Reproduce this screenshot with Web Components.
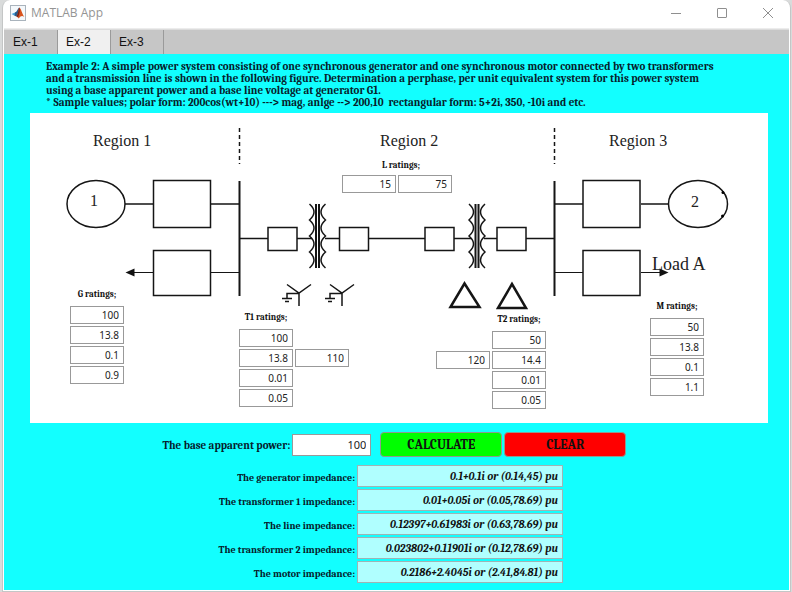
<!DOCTYPE html>
<html lang="en">
<head>
<meta charset="utf-8">
<meta name="viewport" content="width=device-width, initial-scale=1">
<title>MATLAB App</title>
<style>
  html, body { height: 100%; }
  body { margin: 0; background: #d9dbdb; }
</style>
</head>
<body>
<app-window caption="MATLAB App">
  <tab-strip slot="tabs"></tab-strip>
  <example-text></example-text>
  <power-diagram></power-diagram>
  <base-form></base-form>
  <result-list></result-list>
</app-window>

<script>
const define = (name, html) => {
  customElements.define(name, class extends HTMLElement {
    constructor() {
      super();
      this.attachShadow({ mode: 'open' });
    }
    connectedCallback() {
      this.shadowRoot.innerHTML = typeof html === 'function' ? html(this) : html;
    }
  });
};

const serif = '"Cambria", "Caladea", "Liberation Serif", serif';

define('app-window', host => `
  <style>
    :host { display: flex; flex-direction: column; box-sizing: border-box; min-height: 100%;
      margin: 0 1px 0 2px; border: solid #c4c6c6; border-width: 0 1px 1px; border-radius: 8px 8px 0 0;
      background: #fff; overflow: hidden; padding: 0 1px 1px; }
    header { display: flex; align-items: center; height: 29px; padding: 0 13px 3px 6px; box-sizing: border-box;
      border-bottom: 1px solid #ececec; }
    h1 { flex: 1; margin: 0 0 0 5px; font: 12px/16px "Open Sans", sans-serif; color: #949494; }
    nav { display: flex; gap: 30px; }
    button { border: 0; padding: 0; background: none; width: 16px; height: 16px; display: block; }
    svg { display: block; }
    main { flex: 1; background: #12ffff; padding: 7px 0; }
  </style>
  <header>
    <svg width="16" height="16" viewBox="0 0 16 16" aria-hidden="true">
      <rect x=".5" y=".5" width="15" height="15" fill="#f4f8fb" stroke="#a9b3bc"/>
      <path d="M1.5 9 5 7.4 6.8 8.8 4.6 10.8Z" fill="#4aa0d8"/>
      <path d="M5 7.4C7 7.2 7.6 4 9.2 2.6L8.4 8.4 6.4 11.4 4.6 10.8Z" fill="#275b8c"/>
      <path d="M9.2 2.6C11 3.2 12 8.6 14.4 12.2 12.4 10.4 11 10.4 8.6 13.6 8 12 7.4 11.4 6.4 11.4 8 9.6 8.4 5 9.2 2.6Z" fill="#d9541e"/>
      <path d="M9.2 2.6C10.2 4.6 10 8.4 8 12.4 7.6 11.8 7 11.4 6.4 11.4 8 9.6 8.4 5 9.2 2.6Z" fill="#7a2318"/>
    </svg>
    <h1>${host.getAttribute('caption')}</h1>
    <nav>
      <button aria-label="Minimize"><svg width="16" height="16"><path d="M3 8.5h10" stroke="#8f8f8f"/></svg></button>
      <button aria-label="Maximize"><svg width="16" height="16"><rect x="3.5" y="3.5" width="9" height="9" rx=".5" fill="none" stroke="#8f8f8f"/></svg></button>
      <button aria-label="Close"><svg width="16" height="16"><path d="M3 3 13 13M13 3 3 13" stroke="#8f8f8f"/></svg></button>
    </nav>
  </header>
  <slot name="tabs"></slot>
  <main><slot></slot></main>`);

define('tab-strip', `
  <style>
    :host { display: block; background: #c6c6c6; border-top: 1px solid #dcdcdc; }
    div { display: flex; height: 24px; padding-left: 1px; }
    button { width: 53px; border: 0; border-right: 1px solid #9a9a9a; padding: 0 0 0 8px; text-align: left;
      background: none; font: 12px/24px "Liberation Sans", Arial, sans-serif; color: #111; }
    [aria-selected="true"] { background: #f0f0f0; }
  </style>
  <div role="tablist">
    <button role="tab" aria-selected="false">Ex-1</button>
    <button role="tab" aria-selected="true">Ex-2</button>
    <button role="tab" aria-selected="false">Ex-3</button>
  </div>`);

define('example-text', `
  <style>
    :host { display: block; padding: 0 8px 0 42px; color: #06202a; }
    p { margin: 0; font: bold 11px/12px ${serif}; white-space: pre-wrap; }
  </style>
  <p>Example 2: A simple power system consisting of one synchronous generator and one synchronous motor connected by two transformers<br>and a transmission line is shown in the following figure. Determination a perphase, per unit equivalent system for this power system<br>using a base apparent power and a base line voltage at generator G1.</p>
  <p>* Sample values; polar form: 200cos(wt+10) ---&gt; mag, anlge --&gt; 200,10  rectangular form: 5+2i, 350, -10i and etc.</p>`);

/* values: the main column (a row for the line); side: an extra field beside the second one */
define('rating-group', host => {
  const title = host.getAttribute('label');
  const values = host.getAttribute('values').split(' ');
  const side = host.getAttribute('side');
  const field = (v, i, cls) => `<input class="${cls}" aria-label="${title} ${i}" value="${v}">`;
  return `
  <style>
    :host { display: block; }
    fieldset { margin: 0; padding: 0; border: 0; min-width: 0; display: grid; gap: 2px;
      grid-template-columns: repeat(var(--columns, 1), 54px); }
    .title { font: bold 9px/12px ${serif}; color: #111; text-align: center; white-space: nowrap; margin-bottom: 4px;
      grid-row: 1; grid-column: var(--title-column, 1); }
    input { box-sizing: border-box; width: 54px; height: 18px; border: 1px solid #999; border-radius: 0; margin: 0;
      padding: 0 4px; text-align: right; font: 10px/16px "Noto Sans", sans-serif; color: #222; background: #fff; }
    .main { grid-column: var(--main-column, 1); }
    .side { grid-column: var(--side-column, 2); grid-row: 3; }
    :host([row]) .title { grid-column: 1 / 3; margin-bottom: 2px; padding-left: 8px; }
    :host([row]) .main { grid-column: auto; }
  </style>
  <fieldset aria-label="${title}">
    <span class="title">${title}</span>
    ${values.map((v, i) => field(v, i + 1, 'main')).join('')}
    ${side ? field(side, 'second side', 'side') : ''}
  </fieldset>`;
});

define('power-diagram', () => {
  const coil = (x, dir) => `<path d="M${x} 204${('q' + 9 * dir + ' 8 0 16').repeat(4)}"/>`;
  const transformer = x => `
    ${coil(x - 8, 1)}${coil(x + 8, -1)}
    <path d="M${x - 1.5} 204v64M${x + 1.5} 204v64" stroke-width="2"/>`;
  const wye = x => `<path d="M${x - 12} 284.5 ${x} 293l12-8.5M${x} 293v13M${x} 293.5h-12v5M${x - 17} 298.5h10M${x - 14} 301.5h4"/>`;
  const groups = [
    ['G ratings;', '100 13.8 0.1 0.9', 40, 175, ''],
    ['T1 ratings;', '100 13.8 0.01 0.05', 209, 198, 'side="110" style="--columns:2"'],
    ['L ratings;', '15 75', 312, 46, 'row style="--columns:2"'],
    ['T2 ratings;', '50 14.4 0.01 0.05', 406, 200, 'side="120" style="--columns:2;--title-column:2;--main-column:2;--side-column:1"'],
    ['M ratings;', '50 13.8 0.1 1.1', 620, 187, '']
  ];
  return `
  <style>
    :host { display: block; position: relative; margin: 4px 21px 0 26px; background: #fff; aspect-ratio: 738 / 310; }
    svg { display: block; width: 100%; height: 100%; }
    text { font-family: "Liberation Serif", "Times New Roman", serif; font-size: 16px; fill: #222; stroke: none; }
    .large { font-size: 18px; }
    .node { position: absolute; left: calc(var(--x) / 738 * 100%); top: calc(var(--y) / 310 * 100%); }
  </style>
  <svg viewBox="30 113 738 310" role="img" aria-label="One-line diagram of the power system">
    <g fill="none" stroke="#151515" stroke-width="1.5">
      <path d="M239.5 128v36M554.5 128v36" stroke-dasharray="4 3"/>
      <path d="M239.500 181v115M554.5 181v115" stroke-width="2"/>
      <ellipse cx="96" cy="204" rx="29" ry="23.5"/>
      <ellipse cx="698" cy="204" rx="29.5" ry="23.5"/>
      <path d="M125 204h28M211 204h28M555 204h28M641 204h28"/>
      <path d="M133 272.5h20M211 272.5h28M555 272.5h28M641 272.5h20" stroke-width="1"/>
      <rect x="153.5" y="180.5" width="57" height="47"/>
      <rect x="153.5" y="250.5" width="57" height="45"/>
      <rect x="583" y="180.5" width="57" height="47"/>
      <rect x="583" y="250.5" width="57" height="45"/>
      <path d="M240 238.5h28M297 238.5h15M325 238.5h14M368 238.5h57M454 238.5h17M484 238.5h13M526 238.5h29"/>
      <rect x="268" y="227.5" width="29" height="23"/>
      <rect x="339.5" y="227.5" width="29" height="23"/>
      <rect x="425" y="227.5" width="29" height="23"/>
      <rect x="497" y="227.5" width="29" height="23"/>
      ${transformer(317.5)}${transformer(477)}
      ${wye(299)}${wye(342)}
      <path d="M464.5 283.5 450.5 307h29ZM512 284 498 308h28Z" stroke-width="2.5"/>
    </g>
    <path d="M125.5 272.5l9-4v8ZM668.5 272.5l-9-4v8Z" fill="#111"/>
    <circle cx="723" cy="192.500" r="1.5"/><circle cx="722.5" cy="216" r="1.5"/>
    <text x="93" y="146">Region 1</text>
    <text x="380" y="146">Region 2</text>
    <text x="609" y="146">Region 3</text>
    <text x="90" y="206">1</text>
    <text x="691" y="207">2</text>
    <text class="large" x="652" y="270">Load A</text>
  </svg>
  ${groups.map(([label, values, x, y, more]) => `
    <div class="node" style="--x:${x};--y:${y}"><rating-group label="${label}" values="${values}" ${more}></rating-group></div>`).join('')}`;
});

define('base-form', `
  <style>
    :host { display: block; margin-top: 9px; }
    form { display: grid; grid-template-columns: 285fr 79px 253px 160fr; align-items: center; column-gap: 2px; }
    label { font: bold 11px/16px ${serif}; color: #06202a; text-align: right; white-space: nowrap; padding-top: 2px; }
    input { box-sizing: border-box; width: 100%; height: 22px; border: 1px solid #999; margin: 0; padding: 0 4px;
      text-align: right; font: 11px/20px "Noto Sans", sans-serif; color: #222; background: #fff; }
    .actions { display: flex; gap: 2px; padding-left: 7px; }
    button { flex: 1; height: 25px; border: 1px solid #8f9a8f; border-radius: 4px; padding: 0; color: #111;
      font: bold 13px/22px ${serif}; }
    .go { background: #00ff00; }
    .clear { background: #ff0000; }
  </style>
  <form onsubmit="return false">
    <label for="base">The base apparent power:</label>
    <input id="base" value="100">
    <div class="actions">
      <button class="go" type="button">CALCULATE</button>
      <button class="clear" type="button">CLEAR</button>
    </div>
  </form>`);

define('result-row', host => `
  <style>
    :host { display: grid; grid-template-columns: 351fr 206px 224fr; column-gap: 2px; align-items: center; }
    label { font: bold 10px/16px ${serif}; color: #06202a; text-align: right; white-space: nowrap; padding-top: 4px; }
    input { box-sizing: border-box; width: 100%; height: 22px; border: 1px solid #9fb4b4; margin: 0; padding: 0 4px;
      text-align: right; font: italic bold 11px/20px ${serif}; color: #111; background: #b0ffff; }
  </style>
  <label for="value">${host.getAttribute('label')}</label>
  <input id="value" readonly value="${host.getAttribute('value')}">`);

define('result-list', `
  <style>:host { display: grid; gap: 2px; margin-top: 8px; }</style>
  <result-row label="The generator impedance:" value="0.1+0.1i or (0.14,45) pu"></result-row>
  <result-row label="The transformer 1 impedance:" value="0.01+0.05i or (0.05,78.69) pu"></result-row>
  <result-row label="The line impedance:" value="0.12397+0.61983i or (0.63,78.69) pu"></result-row>
  <result-row label="The transformer 2 impedance:" value="0.023802+0.11901i or (0.12,78.69) pu"></result-row>
  <result-row label="The motor impedance:" value="0.2186+2.4045i or (2.41,84.81) pu"></result-row>`);
</script>
</body>
</html>
